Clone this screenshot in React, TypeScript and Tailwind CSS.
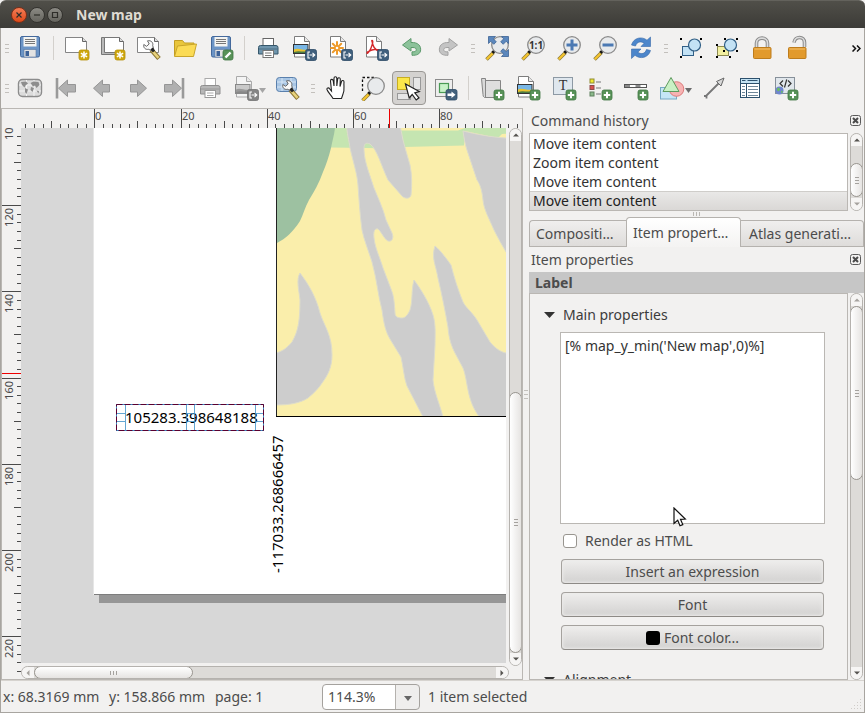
import React from "react";

const range = (from: number, to: number, step: number) => {
  const out: number[] = [];
  for (let v = from; v <= to; v += step) out.push(v);
  return out;
};

/* ---------- small marks shared by icons ---------- */

const AddMark = () => (
  <g>
    <rect x="14" y="14" width="10" height="10" rx="2" fill="#589258" stroke="#3f7743" strokeWidth="0.8" />
    <path d="M19 15.8v6.4M15.8 19h6.4" stroke="#fff" strokeWidth="2" />
  </g>
);
const StarMark = () => (
  <g>
    <rect x="14" y="14" width="10" height="10" rx="2" fill="#cfa70d" stroke="#b8930a" strokeWidth="0.8" />
    <path d="M19 15.5v7M15.9 17.2l6.2 3.6M22.1 17.2l-6.2 3.6" stroke="#fff" strokeWidth="1.5" />
  </g>
);
const ExportMark = ({ gray = false }: { gray?: boolean }) => (
  <g>
    <rect x="13.5" y="13.5" width="11" height="11" rx="2" fill={gray ? "#858585" : "#40607d"} stroke={gray ? "#727272" : "#2c4a66"} strokeWidth="0.8" />
    <path d="M18 16h-2v6h2M17.5 19h5M20.5 16.8l2.3 2.2-2.3 2.2" stroke="#fff" strokeWidth="1.1" fill="none" />
  </g>
);
const TallSheet = ({ gray = false }: { gray?: boolean }) => (
  <g>
    <path d="M2.5 0.5h10l5 5v15.5h-15z" fill={gray ? "#f4f4f4" : "#fff"} stroke={gray ? "#aaa" : "#7d7d7d"} />
    <path d="M12.5 0.5v5h5" fill="#e8e8e8" stroke={gray ? "#aaa" : "#7d7d7d"} />
  </g>
);
const WideSheet = () => (
  <g>
    <path d="M0.5 1.5h17l4 4v11h-21z" fill="#fff" stroke="#858585" />
    <path d="M17.5 1.5v4h4" fill="#dcdcdc" stroke="#666" />
  </g>
);
const Wrench = () => (
  <g>
    <path d="M14.5 14l7.5 8.500" stroke="#8a7430" strokeWidth="4.6" />
    <path d="M15 14.500l6.500 7.400" stroke="#e8d27c" strokeWidth="2.600" />
    <path d="M10.500 4.800c3.500-.8 6 1.800 5.200 4.700l1 3.500-2 1.800-3.200-1.500C8.500 14 6 11.500 6.800 8.500l2.700 1.800 2.700-2.300z" fill="#fafafa" stroke="#555" strokeWidth="0.9" />
    <path d="M14.500 12.500l2.500 3" stroke="#222" strokeWidth="2.800" />
  </g>
);
const Lens = ({ children }: { children?: React.ReactNode }) => (
  <g>
    <path d="M8.5 16.5L1.5 23.5" stroke="#8b7a3a" strokeWidth="3.6" />
    <path d="M7.5 17.5L1.8 23.2" stroke="#f6c52e" strokeWidth="2.2" />
    <path d="M9.8 14.5l-2.3 2.3" stroke="#111" strokeWidth="3" />
    <circle cx="15" cy="9" r="8.3" fill="#e8eaec" stroke="#8a8a8a" strokeWidth="1.3" />
    {children}
  </g>
);
const Printer = ({ gray = false }: { gray?: boolean }) => (
  <g>
    <rect x="7" y="2.5" width="10.5" height="8" fill="#fff" stroke={gray ? "#aaa" : "#666"} />
    <path d="M4.5 9.5h15.5a2 2 0 0 1 2 2v6.500h-19.500v-6.500a2 2 0 0 1 2-2z" fill={gray ? "#b7b7b7" : "#6f95ad"} stroke={gray ? "#8f8f8f" : "#35576b"} />
    <path d="M3 13h18.500" stroke={gray ? "#989898" : "#4c6f83"} />
    <rect x="7" y="14.5" width="10.5" height="7" fill="#fff" stroke={gray ? "#999" : "#777"} />
    <path d="M9 17h6.500M9 19.500h6.500" stroke={gray ? "#aaa" : "#777"} />
  </g>
);
const Arrow = ({ flip = false, bar = false }: { flip?: boolean; bar?: boolean }) => (
  <g transform={flip ? "translate(24 0) scale(-1 1)" : undefined}>
    {bar && <path d="M3 2v20.500" stroke="#9a9a9a" strokeWidth="2.6" />}
    <path
      d={bar ? "M4.500 12.200L13.500 4v4.500h8v7.500h-8v4.500z" : "M3.500 12.200L12.500 4v4.500h7v7.500h-7v4.500z"}
      fill="#b0b0b0"
      stroke="#969696"
    />
  </g>
);
const Floppy = () => (
  <g>
    <rect x="2.5" y="0.5" width="19" height="20.5" rx="1.5" fill="#6b94c6" stroke="#44699c" />
    <rect x="5.5" y="1" width="13" height="9.5" fill="#f4f4f2" />
    <path d="M7 3.500h10M7 5.500h10M7 7.500h10" stroke="#777" />
    <rect x="6" y="13.5" width="12" height="7.5" fill="#e3e3e3" stroke="#5877a0" strokeWidth="0.6" />
    <rect x="7.5" y="15" width="3.5" height="5" fill="#3d6298" />
  </g>
);
const Picture = ({ gray = false }: { gray?: boolean }) => (
  <g>
    <rect x="1.5" y="8.5" width="14.5" height="9" fill={gray ? "#c9c9c9" : "#79b7e6"} stroke={gray ? "#888" : "#333"} />
    <path d="M2 13.500c4-2.500 9 1.500 13.500 0V17H2z" fill={gray ? "#999" : "#e9c331"} />
    <path d="M2 16c5-2 9 .5 13.500-1V17H2z" fill={gray ? "#888" : "#4c7b45"} />
  </g>
);
const Lock = ({ open = false }: { open?: boolean }) => {
  const shackle = open ? "M8 6.500C9-.5 18.500 0 18.500 6.500V11" : "M6.500 12V7C6.500.5 17.500.5 17.500 7v5";
  return (
    <g>
      <path d={shackle} fill="none" stroke="#8a8a8a" strokeWidth="3.6" />
      <path d={shackle} fill="none" stroke="#dcdcdc" strokeWidth="1.6" />
      <rect x={open ? 2.5 : 3.5} y="11.5" width="17.5" height="11" rx="1" fill="#e29a2c" stroke="#bd7c1c" />
      <path d={open ? "M3.500 13h15.500" : "M4.500 13h15.500"} stroke="#f2bf6c" />
    </g>
  );
};
const Corners = () => (
  <path d="M2 2h2v2H2zM22 2h2v2h-2zM2 20h2v2H2zM22 20h2v2h-2z" fill="#000" />
);
const undoPath =
  "M2.5 9L11 2.5v4c7-.5 10.500 3.500 9.500 8.500-.8 3-3.500 4.500-8.500 4.300v-3.500c3.500.3 4.500-1.200 4.200-2.500-.4-1.800-2.200-1.800-5.200-1.800V15z";

const icons: Record<string, React.ReactNode> = {
  save: <Floppy />,
  newDoc: <g><WideSheet /><StarMark /></g>,
  duplicate: (
    <g>
      <path d="M0.5 1.5h17v17h-17z" fill="#b9b9b9" stroke="#777" />
      <path d="M3.5 1.5h15l4 4v11h-19z" fill="#fff" stroke="#777" />
      <path d="M18.5 1.5v4h4" fill="#dcdcdc" stroke="#666" />
      <StarMark />
    </g>
  ),
  manager: <g><WideSheet /><Wrench /></g>,
  open: (
    <g>
      <path d="M1.5 20V4.500h8l2 2.500h9.500v3" fill="#e9c63c" stroke="#c29d23" />
      <path d="M1.5 20.500L4.500 10l19-2-3 12.500z" fill="#fbdb55" stroke="#c9a52b" />
    </g>
  ),
  saveTemplate: (
    <g>
      <Floppy />
      <rect x="14" y="14" width="10" height="10" rx="2" fill="#589258" stroke="#3f7743" strokeWidth="0.8" />
      <path d="M16.500 21.500l5-5" stroke="#fff" strokeWidth="2.4" />
    </g>
  ),
  print: <Printer />,
  image: <g><TallSheet /><Picture /><ExportMark /></g>,
  svg: (
    <g>
      <TallSheet />
      <path d="M9 6v12M3 12h12M4.800 7.800l8.400 8.400M13.200 7.800l-8.400 8.400" stroke="#ee9a2a" strokeWidth="2" strokeLinecap="round" />
      <circle cx="9" cy="12" r="1.3" fill="#fff" />
      <ExportMark />
    </g>
  ),
  pdf: (
    <g>
      <TallSheet />
      <path d="M8 4.500c1.500 0 .5 4-1 7.500s-3.500 6-4 5 4-3 7.500-3.500 5.500.5 5 1.500-5.500-2-6.500-6-1.500-4.500-1-4.500z" fill="none" stroke="#d4282b" strokeWidth="1.4" />
      <ExportMark />
    </g>
  ),
  undo: <path d={undoPath} fill="#8cc29a" stroke="#5c9a6c" />,
  redo: <path transform="translate(24 0) scale(-1 1)" d={undoPath} fill="#c4c4c4" stroke="#a2a2a2" />,
  zoomFull: (
    <g>
      <Lens />
      <path d="M3.500.500h7L8.300 2.800l3 3-2.500 2.500-3-3L3.500 7.500zM23.500.500h-7l2.200 2.300-3 3 2.500 2.500 3-3 2.300 2.200zM23.500 20.500h-7l2.200-2.300-3-3 2.500-2.500 3 3 2.300-2.200z" fill="#5b87bd" stroke="#3c6394" strokeWidth="0.8" />
    </g>
  ),
  zoomActual: (
    <Lens>
      <text x="15" y="13" textAnchor="middle" className="text-[10px] font-bold" fill="#333">1:1</text>
    </Lens>
  ),
  zoomIn: <Lens><path d="M15 3.500v11M9.500 9h11" stroke="#4b79b3" strokeWidth="3" /></Lens>,
  zoomOut: <Lens><path d="M9.500 9h11" stroke="#4b79b3" strokeWidth="3" /></Lens>,
  refresh: (
    <g fill="#4c86cb" stroke="#3568a8" strokeWidth="0.6">
      <path d="M2.500 9C4.500 1.500 13 0 18 4.200L21.500 1v9.500h-9.500l3.200-3.300C11.500 5 8 5.500 6.500 10z" />
      <path d="M21.500 14.500c-2 7.500-10.500 9-15.500 4.800L2.500 22.500V13H12l-3.200 3.300c3.700 2.200 7.200 1.700 8.700-2.800z" />
    </g>
  ),
  group: (
    <g>
      <rect x="4.5" y="10.5" width="11" height="9" fill="#c3e2f5" stroke="#315f86" />
      <circle cx="16.5" cy="9" r="6" fill="#c3e2f5" stroke="#315f86" strokeWidth="1.2" />
      <Corners />
    </g>
  ),
  ungroup: (
    <g>
      <rect x="3.5" y="10.5" width="11" height="9" fill="#f3f0a0" stroke="#8c8a52" />
      <circle cx="16.5" cy="9" r="6" fill="#c3e2f5" stroke="#315f86" strokeWidth="1.2" />
      <path d="M2 8h2v2H2zM10 2h2v2h-2zM22 2h2v2h-2zM2 20h2v2H2zM22 14h2v2h-2zM15 20h2v2h-2zM9 14h2v2H9z" fill="#000" />
    </g>
  ),
  lock: <Lock />,
  unlock: <Lock open />,
  atlas: (
    <g>
      <rect x="0.5" y="3.5" width="23" height="17" rx="4" fill="#dcdcdc" stroke="#8c8c8c" strokeWidth="1.4" />
      <path d="M1 9h22M1 15h22M8.500 4v16M16 4v16" stroke="#f4f4f4" />
      <path d="M3 6l5-.5 2 2-2.500 2-1 2L4 9zM7 12l3 1.500-1.500 4.500L7 16zM12.500 7l3-1.500 5 .5 1 3-3 3-1.500-2.500-2 1zM13 11l3 1-1.500 4-2-2zM18.500 14.500l2.500.5-.5 2.500z" fill="#8d8d8d" />
    </g>
  ),
  first: <Arrow bar />,
  prev: <Arrow />,
  next: <Arrow flip />,
  last: <Arrow bar flip />,
  printGray: <Printer gray />,
  imageGray: <g><TallSheet gray /><Picture gray /><ExportMark gray /></g>,
  atlasSettings: (
    <g>
      <rect x="0.5" y="1.5" width="20" height="14" rx="3" fill="#a9c6e4" stroke="#5a80ad" />
      <path d="M1 6h19M1 11h19M6 2v13M15 2v13" stroke="#d7e6f5" />
      <Wrench />
    </g>
  ),
  pan: (
    <path d="M8 22.500C6 19 3 16.500 2 13.500c-.5-1.800 1.700-2.200 2.700-.7L6.500 15 5.500 5c0-2 2.300-2.200 2.700-.3L9 10V2.300c0-2 2.700-2 2.800 0V10l.9-7c.2-1.900 2.700-1.600 2.600.3L15 10.500l1.500-5c.6-1.700 2.700-1.100 2.500.7C18.500 10 20 14 18 18l-1.500 4.500z" fill="#fff" stroke="#222" strokeWidth="1.1" />
  ),
  zoomTool: (
    <g>
      <path d="M1.5 15V1.500H15" fill="none" stroke="#111" strokeWidth="1.3" strokeDasharray="2.5 2" />
      <g transform="translate(0 1)"><Lens /></g>
    </g>
  ),
  select: (
    <g>
      <rect x="0.5" y="1.5" width="12" height="12" fill="#fbe74a" stroke="#c7ad22" />
      <rect x="16.5" y="1.5" width="7" height="12" fill="#e6e6e6" stroke="#999" />
      <rect x="0.5" y="17.5" width="13" height="6" fill="#e6e6e6" stroke="#999" />
      <path d="M8.500 8l3.700 14 3-3.500 4 5.500 2.800-2.200-4.200-5 4.500-1.300z" fill="#fff" stroke="#222" strokeWidth="1.2" />
    </g>
  ),
  moveContent: (
    <g>
      <rect x="2.5" y="3.5" width="17" height="17" fill="#eee" stroke="#8b8b8b" />
      <rect x="6.5" y="7.5" width="9" height="9" fill="#c8f2c8" stroke="#4b9a55" strokeWidth="1.2" />
      <rect x="13" y="13.5" width="11" height="10.5" rx="2" fill="#43617c" stroke="#2c4a66" strokeWidth="0.8" />
      <path d="M14.500 17.500h4v-2l4 3.300-4 3.300v-2h-4z" fill="#fff" />
    </g>
  ),
  addMap: (
    <g>
      <path d="M1.5 2.500h4v13h3v6h-4a3 3 0 0 1-1.500-3z" fill="#d9d9d9" stroke="#858585" />
      <path d="M5.500 4.500h15v17h-15z" fill="#dedede" stroke="#858585" />
      <AddMark />
    </g>
  ),
  addImage: <g><TallSheet /><Picture /><AddMark /></g>,
  addLabel: (
    <g>
      <rect x="1.5" y="1.5" width="19" height="17" fill="#dfe7ee" stroke="#8d99a4" />
      <text x="11" y="14" textAnchor="middle" className="font-['Liberation_Serif',serif] text-[14px]" fill="#333">T</text>
      <AddMark />
    </g>
  ),
  addLegend: (
    <g>
      <rect x="2" y="3" width="4" height="4" fill="#f1ea2e" stroke="#8f8b33" />
      <rect x="2" y="9.5" width="4" height="4" fill="#d8504f" stroke="#8d4b4a" />
      <rect x="2" y="16" width="4" height="4" fill="#8bb98b" stroke="#5d805d" />
      <path d="M8 6h5M8 12h5M8 18h5" stroke="#a0a0a0" strokeWidth="1.4" />
      <AddMark />
    </g>
  ),
  addScale: (
    <g>
      <rect x="0.5" y="8.5" width="22" height="3" fill="#fff" stroke="#555" />
      <path d="M1 10h5M11.500 10h5" stroke="#8b8b8b" strokeWidth="2" />
      <AddMark />
    </g>
  ),
  addShape: (
    <g>
      <rect x="0.5" y="11.5" width="16" height="11.5" fill="#c5e6f6" stroke="#77a9c4" />
      <circle cx="16.5" cy="13" r="7.3" fill="#f7b3b3" stroke="#dd7c7c" />
      <path d="M11 1.500L19 15.500H3z" fill="#c9f0c4" stroke="#5e9a5e" />
    </g>
  ),
  addArrow: (
    <g>
      <path d="M3.500 20.500L17 7M2 20h2.500v2.500" stroke="#777" strokeWidth="1.8" fill="none" />
      <path d="M22 2l-3 8-4.500-4.500z" fill="#d8d8d8" stroke="#666" />
    </g>
  ),
  addTable: (
    <g>
      <rect x="2.5" y="2.5" width="19" height="19" fill="#fff" stroke="#2c506c" />
      <rect x="3" y="3" width="18" height="4" fill="#c3e2f3" />
      <path d="M3 7.500h18M8.500 7.500v14" stroke="#2c506c" />
      <path d="M4 4.500h3.500M9.500 4.500h10" stroke="#2c506c" />
      <path d="M4 10.500h3M4 13.500h3M4 16.500h3M4 19.500h3M10 10.500h10M10 13.500h10M10 16.500h10M10 19.500h10" stroke="#6f8799" />
    </g>
  ),
  addHtml: (
    <g>
      <rect x="1.5" y="1.5" width="19" height="16" fill="#e1e7ec" stroke="#87909a" />
      <path d="M9 4.500L6 7.500l3 3M14 4.500l3 3-3 3M12.700 3.500l-2.200 8" fill="none" stroke="#333" strokeWidth="1.2" />
      <circle cx="5.5" cy="14.5" r="4" fill="#6f86cf" />
      <path d="M3.500 12c2-1 3 1 2 2.500s-2 .5-2.500-.5zM7 14.500l2 1-1.500 2.300z" fill="#6cc05c" />
      <AddMark />
    </g>
  ),
};

type Tool = { id: string; label: string; drop?: boolean; pressed?: boolean; gray?: boolean } | "sep" | "grip";

const rowOne: Tool[] = [
  { id: "save", label: "Save project" }, "sep",
  { id: "newDoc", label: "New composer" }, { id: "duplicate", label: "Duplicate composer" },
  { id: "manager", label: "Composer manager" }, { id: "open", label: "Add items from template" },
  { id: "saveTemplate", label: "Save as template" }, "sep",
  { id: "print", label: "Print" }, { id: "image", label: "Export as image" }, { id: "svg", label: "Export as SVG" },
  { id: "pdf", label: "Export as PDF" }, { id: "undo", label: "Undo" }, { id: "redo", label: "Redo" }, "grip",
  { id: "zoomFull", label: "Zoom full" }, { id: "zoomActual", label: "Zoom to 100%" }, { id: "zoomIn", label: "Zoom in" },
  { id: "zoomOut", label: "Zoom out" }, { id: "refresh", label: "Refresh view" }, "grip",
  { id: "group", label: "Group items" }, { id: "ungroup", label: "Ungroup items" },
  { id: "lock", label: "Lock selected items" }, { id: "unlock", label: "Unlock all items" },
];

const rowTwo: Tool[] = [
  { id: "atlas", label: "Preview atlas" }, { id: "first", label: "First feature" }, { id: "prev", label: "Previous feature" },
  { id: "next", label: "Next feature" }, { id: "last", label: "Last feature" }, { id: "printGray", label: "Print atlas" },
  { id: "imageGray", label: "Export atlas", drop: true, gray: true }, { id: "atlasSettings", label: "Atlas settings" }, "grip",
  { id: "pan", label: "Pan composer" }, { id: "zoomTool", label: "Zoom" }, { id: "select", label: "Select or move item", pressed: true },
  { id: "moveContent", label: "Move item content" }, "sep",
  { id: "addMap", label: "Add new map" }, { id: "addImage", label: "Add image" }, { id: "addLabel", label: "Add new label" },
  { id: "addLegend", label: "Add new legend" }, { id: "addScale", label: "Add new scalebar" },
  { id: "addShape", label: "Add basic shape", drop: true }, { id: "addArrow", label: "Add arrow" },
  { id: "addTable", label: "Add attribute table" }, { id: "addHtml", label: "Add HTML frame" },
];

const Grip = () => (
  <span className="flex flex-col gap-[3px]">
    <i className="h-px w-1 bg-[#c3c0bc]" /><i className="h-px w-1 bg-[#c3c0bc]" /><i className="h-px w-1 bg-[#c3c0bc]" />
  </span>
);

function Toolbar({ tools, label, more }: { tools: Tool[]; label: string; more?: boolean }) {
  return (
    <div role="toolbar" aria-label={label} className="flex h-10 items-center overflow-hidden">
      <span className="flex w-[11px] shrink-0 justify-center"><Grip /></span>
      {tools.map((t, i) => {
        if (t === "sep") return <span key={i} className="flex w-[11px] shrink-0 justify-center"><i className="h-6 w-px bg-[#d3d0cc]" /></span>;
        if (t === "grip") return <span key={i} className="flex w-[13px] shrink-0 justify-center"><Grip /></span>;
        return (
          <button
            key={i}
            aria-label={t.label}
            className={
              t.pressed
                ? "flex h-[34px] w-[34px] mx-px shrink-0 items-center justify-center rounded border border-[#9a9895] bg-[#d4d2d0]"
                : t.drop
                  ? "flex h-9 w-[42px] shrink-0 items-center justify-center"
                  : "flex h-9 w-9 shrink-0 items-center justify-center"
            }
          >
            <svg width="26" height="26" viewBox="-1 -1 26 26" className="shrink-0">{icons[t.id]}</svg>
            {t.drop && (
              <svg width="7" height="5" viewBox="0 0 7 5" className="mt-1 shrink-0">
                <path d="M0 0h7L3.5 5z" fill={t.gray ? "#a5a5a5" : "#6c6c6c"} />
              </svg>
            )}
          </button>
        );
      })}
      {more && (
        <button aria-label="More tools" className="ml-auto mr-[3px] shrink-0">
          <svg width="9" height="7" viewBox="0 0 9 7"><path d="M.5.5l3 3-3 3M5 .5l3 3-3 3" fill="none" stroke="#111" strokeWidth="1.5" /></svg>
        </button>
      )}
    </div>
  );
}

/* ---------- scroll bars ---------- */

const Tri = ({ dir, dim }: { dir: "up" | "down" | "left" | "right"; dim?: boolean }) => {
  const d = { up: "M0 4.5h6L3 1.5z", down: "M0 1.5h6L3 4.5z", left: "M4.5 0v6L1.5 3z", right: "M1.5 0v6L4.5 3z" }[dir];
  return <svg width="6" height="6" viewBox="0 0 6 6"><path d={d} fill={dim ? "#a5a29e" : "#55534f"} /></svg>;
};

function VBar({ before, thumb, after, dimUp, dimDown }: { before: number; thumb: number; after: number; dimUp?: boolean; dimDown?: boolean }) {
  return (
    <div className="flex w-[13px] shrink-0 flex-col overflow-hidden rounded-full border border-[#b5b2ae] bg-[#dddbd8]">
      <button aria-label="Scroll up" className="flex h-3 shrink-0 items-center justify-center bg-[#f6f5f4]"><Tri dir="up" dim={dimUp} /></button>
      <div className="basis-0" style={{ flexGrow: before }} />
      <div style={{ flexGrow: thumb }} className="-mx-px flex basis-0 flex-col items-center justify-center gap-[2px] rounded-full border border-[#98958f] bg-linear-to-r from-white to-[#e6e4e2]">
        <i className="h-px w-1 bg-[#a5a29e]" /><i className="h-px w-1 bg-[#a5a29e]" /><i className="h-px w-1 bg-[#a5a29e]" />
      </div>
      <div className="basis-0" style={{ flexGrow: after }} />
      <button aria-label="Scroll down" className="flex h-3 shrink-0 items-center justify-center bg-[#f6f5f4]"><Tri dir="down" dim={dimDown} /></button>
    </div>
  );
}

function HBar() {
  return (
    <div className="mt-[3px] flex h-[13px] shrink-0 overflow-hidden rounded-full border border-[#b5b2ae] bg-[#dddbd8]">
      <button aria-label="Scroll left" className="flex w-3 shrink-0 items-center justify-center bg-[#f6f5f4]"><Tri dir="left" dim /></button>
      <div className="-my-px flex grow-[157] basis-0 items-center justify-center gap-[2px] rounded-full border border-[#98958f] bg-linear-to-b from-white to-[#e6e4e2]">
        <i className="h-1 w-px bg-[#a5a29e]" /><i className="h-1 w-px bg-[#a5a29e]" /><i className="h-1 w-px bg-[#a5a29e]" />
      </div>
      <div className="grow-[304] basis-0" />
      <button aria-label="Scroll right" className="flex w-3 shrink-0 items-center justify-center bg-[#f6f5f4]"><Tri dir="right" /></button>
    </div>
  );
}

/* ---------- rulers and page ---------- */

const PX_PER_MM = 4.313;
const mmX = (mm: number) => Math.round(94.3 + mm * PX_PER_MM) - 2;
const mmY = (mm: number) => Math.round(205 + (mm - 120) * PX_PER_MM) - 128;

function TopRuler() {
  return (
    <svg className="block h-[19px] w-full shrink-0" aria-label="Horizontal ruler">
      {range(-16, 400, 2).map((mm) => {
        const h = mm % 20 === 0 ? 19 : mm % 10 === 0 ? 7 : 4;
        return <rect key={mm} x={mmX(mm)} y={19 - h} width="1" height={h} fill="#4a4a4a" />;
      })}
      {range(0, 80, 20).map((mm) => (
        <text key={mm} x={mmX(mm) + 1} y="11" className="text-[11px]" fill="#4a4a4a">{mm}</text>
      ))}
      <rect x="387" y="0" width="1" height="19" fill="#e00" />
    </svg>
  );
}

function SideRuler() {
  return (
    <svg className="block w-[19px] shrink-0 self-stretch" aria-label="Vertical ruler">
      {range(102, 228, 2).map((mm) => {
        const w = mm % 20 === 0 ? 19 : mm % 10 === 0 ? 7 : 4;
        return <rect key={mm} x={19 - w} y={mmY(mm)} width={w} height="1" fill="#4a4a4a" />;
      })}
      {range(120, 220, 20).map((mm) => (
        <text key={mm} transform={`translate(11 ${mmY(mm) + 3}) rotate(-90)`} textAnchor="end" className="text-[11px]" fill="#4a4a4a">{mm}</text>
      ))}
      <text transform="translate(11 12) rotate(-90)" className="text-[11px]" fill="#4a4a4a">10</text>
      <rect x="0" y="245" width="19" height="1" fill="#e00" />
    </svg>
  );
}

function PageCanvas() {
  return (
    <svg className="mr-[3px] block min-h-0 flex-1 bg-[#d7d7d7]" aria-label="Composition">
      <defs>
        <clipPath id="mapClip"><rect x="277" y="128" width="700" height="288" /></clipPath>
      </defs>
      <g transform="translate(-21 -128)">
        <rect x="99" y="560" width="1200" height="43" fill="#969696" />
        <rect x="93" y="100" width="1200" height="495" fill="#e6e6e6" />
        <rect x="94" y="594" width="1200" height="1" fill="#7d7d7d" />
        <rect x="94" y="100" width="1200" height="494" fill="#fff" />
        <g clipPath="url(#mapClip)">
          <rect x="277" y="128" width="700" height="288" fill="#faeeab" />
          <path d="M330 128H400V148.500L331 147.500z" fill="#c5e5b1" />
          <path d="M399 130.500H458L465 128H520V133L502 134 498 138 465 131 464 145.500 404 147z" fill="#c5e5b1" />
          <path d="M277 120H336L335 128C334 136 332 142 331 148 329 156 326 165 323 172 319 183 314 192 309 200 305 207 303 215 300 221 293 232 285 239 277 243z" fill="#9dc1a1" />
          <g fill="#cdcdcd" stroke="#dddccc">
            <path d="M346 120C347 135 349 140 350 148 354 165 357 173 358 185 359 200 360 215 362 230 364 240 369 252 372 262 377 280 378 295 382 310 384 325 386 332 390 339L401 357C403 365 404 378 407 386L423 417H443C440 405 434 392 433 380L435 345C435 335 436 325 433 315 429 302 420 288 414 280 411 292 413 300 410 310 407 317 404 318 402 318 398 318 395 317 395 313 394 300 394 297 391 289L383 268C380 258 375 248 374 238 373 231 375 228 378 229 381 231 384 239 388 241 392 242 394 238 392 233L386 220C383 208 378 198 374 188L368 170C365 160 364 155 364 148 364 144 366 142 370 144 377 149 381 165 388 180L402 196C405 199 410 199 411 195 412 185 412 175 410 165 408 158 405 148 403 140L399 120z" />
            <path d="M300 273C296 280 299 290 300 300 300 325 297 333 292 342 287 348 283 351 276 353V405C290 405 300 403 308 398 314 393 319 388 322 383 328 375 332 367 332 355 332 335 325 328 320 313 316 297 309 285 300 273z" />
            <path d="M435 246C431 258 436 265 438 278 442 295 445 310 448 327 449 340 452 347 455 353L463 368C466 375 467 388 470 398 473 408 476 412 480 418H560V353H506C500 352 494 347 490 342L477 320C472 312 466 308 463 302 458 290 454 277 451 265 446 258 440 250 435 246z" />
            <path d="M463 131C464 138 465 144 467 150L477 180C480 184 482 190 483 200 484 210 489 218 494 230 498 238 502 245 506 252L560 320V138H506C490 137 475 134 463 131z" />
          </g>
        </g>
        <rect x="276" y="128" width="1" height="289" fill="#222" />
        <rect x="276" y="416" width="900" height="1" fill="#000" />

        <text x="125" y="423" className="text-[15px]" fill="#000">105283.398648188</text>
        <g fill="none" stroke="#3b8fc7">
          <rect x="116.5" y="404.5" width="147" height="26" />
          <path d="M125.500 404v26M255.500 404v26M186.500 404v26M194.500 404v26M186 413.500h9M186 421.500h9M116 413.500h9M116 421.500h9M255 413.500h9M255 421.500h9" strokeWidth="0.8" />
          <rect x="116.5" y="404.5" width="147" height="26" stroke="#5a0030" strokeDasharray="6 2" />
        </g>
        <text transform="translate(283 573) rotate(-90)" className="text-[15px]" fill="#000">-117033.268666457</text>
      </g>
    </svg>
  );
}

/* ---------- dock ---------- */

function DockTitle({ children }: { children: string }) {
  return (
    <div className="flex h-[25px] shrink-0 items-center justify-between pl-0.5 pr-[3px]">
      <h2>{children}</h2>
      <button aria-label={`Close ${children}`}>
        <svg width="11" height="11" viewBox="0 0 11 11" className="block">
          <rect x="0.5" y="0.5" width="10" height="10" rx="2" fill="none" stroke="#5a5a5a" />
          <path d="M3 3l5 5M8 3l-5 5" stroke="#4a4a4a" strokeWidth="2" />
        </svg>
      </button>
    </div>
  );
}

const pushButton =
  "flex h-[25px] items-center justify-center gap-1 rounded border border-[#a5a29e] border-b-[#8d8a86] bg-linear-to-b from-[#efeeed] to-[#d2d1d0] shadow-[inset_0_0_3px_1px_#ecebea]";

function Section({ title, children }: { title: string; children?: React.ReactNode }) {
  return (
    <section>
      <h3 className="flex h-5 items-center gap-2 pl-[14px] text-[#3c3c3c]">
        <svg width="11" height="6" viewBox="0 0 11 6"><path d="M0 0h11L5.5 6z" fill="#333" /></svg>
        {title}
      </h3>
      {children}
    </section>
  );
}

function Dock() {
  const history = ["Move item content", "Zoom item content", "Move item content", "Move item content"];
  return (
    <aside className="flex w-[335px] shrink-0 flex-col">
      <DockTitle>Command history</DockTitle>
      <div className="flex shrink-0 justify-between pr-px">
        <ul role="listbox" aria-label="Command history" className="w-[319px] border border-[#bab7b3] bg-white text-[#333]">
          {history.map((h, i) => (
            <li
              key={i}
              role="option"
              aria-selected={i === 3}
              className={i === 3 ? "h-[19px] border-t border-[#cfcdca] bg-linear-to-b from-[#e9e8e7] to-[#dad8d6] pl-[3px] leading-[18px] text-[#222]" : "h-[19px] pl-[3px] leading-[19px]"}
            >
              {h}
            </li>
          ))}
        </ul>
        <VBar before={18} thumb={34} after={1} dimDown />
      </div>
      <div className="flex h-[6px] shrink-0 items-center justify-center gap-[2px]">
        <i className="h-1 w-px bg-[#bab7b3]" /><i className="h-1 w-px bg-[#bab7b3]" /><i className="h-1 w-px bg-[#bab7b3]" />
      </div>
      <div role="tablist" className="flex h-[30px] shrink-0 items-end text-left">
        <button role="tab" aria-selected="false" className="h-[27px] w-[97px] truncate rounded-tl border border-r-0 border-[#b5b2ae] bg-linear-to-b from-[#f0efee] to-[#dedcda] px-1.5 text-left">Compositi…</button>
        <button role="tab" aria-selected="true" className="h-[30px] w-[115px] truncate rounded-t border border-b-0 border-[#b5b2ae] bg-linear-to-b from-white to-[#f4f3f2] px-1.5 text-left">Item propert…</button>
        <button role="tab" aria-selected="false" className="h-[27px] min-w-0 flex-1 truncate rounded-tr border border-l-0 border-[#b5b2ae] bg-linear-to-b from-[#f0efee] to-[#dedcda] px-2 text-left">Atlas generati…</button>
      </div>
      <DockTitle>Item properties</DockTitle>
      <div className="h-[21px] shrink-0 bg-[#c6c6c6] pl-1.5 font-bold leading-[21px]">Label</div>
      <div className="flex min-h-0 flex-1 justify-between pr-px">
        <div className="flex w-[319px] flex-col overflow-hidden border border-[#bab7b3] pt-[11px]">
          <Section title="Main properties">
            <div className="ml-[30px] mr-[22px] mt-[7px] flex flex-col">
              <div className="relative">
                <textarea
                  aria-label="Label text"
                  defaultValue="[% map_y_min('New map',0)%]"
                  className="block h-48 w-full resize-none border border-[#bab7b3] bg-white px-1 py-[3px] leading-[19px] text-[#333] outline-none"
                />
                <svg width="14" height="20" viewBox="0 0 14 20" className="absolute left-[113px] top-[175px]">
                  <path d="M1 1v15.500l3.700-3.300 2.300 5.600 2.800-1.200-2.300-5.300 4.800-.3z" fill="#fff" stroke="#111" strokeWidth="1.2" />
                </svg>
              </div>
              <label className="mt-[7px] flex h-5 items-center gap-2 pl-[3px]">
                <input type="checkbox" className="h-[14px] w-[14px] appearance-none rounded-[3px] border border-[#98958f] bg-white" />
                Render as HTML
              </label>
              <div className="mx-px mt-2 flex flex-col gap-2">
                <button className={pushButton}>Insert an expression</button>
                <button className={pushButton}>Font</button>
                <button className={pushButton}>
                  <i className="h-[14px] w-[14px] rounded-[3px] bg-black" />
                  Font color...
                </button>
              </div>
            </div>
          </Section>
          <div className="mt-5">
            <Section title="Alignment" />
          </div>
        </div>
        <VBar before={0} thumb={173} after={188} dimUp />
      </div>
    </aside>
  );
}

/* ---------- window ---------- */

function WindowButton({ label, close, children }: { label: string; close?: boolean; children: React.ReactNode }) {
  return (
    <button
      aria-label={label}
      className={
        close
          ? "flex h-4 w-4 items-center justify-center rounded-full border border-[#7c2f18] bg-linear-to-b from-[#f47c54] to-[#dd4814]"
          : "flex h-4 w-4 items-center justify-center rounded-full border border-[#33322e] bg-linear-to-b from-[#8b8a84] to-[#65645e]"
      }
    >
      <svg width="8" height="8" viewBox="0 0 8 8" fill="none" stroke="#2e2d29" strokeWidth="1.2">{children}</svg>
    </button>
  );
}

export default function App() {
  return (
    <div className="flex h-screen flex-col overflow-hidden bg-[#f2f1f0] font-['Noto_Sans','Open_Sans',sans-serif] text-[14px] leading-5 text-[#4c4c4c]">
      <header className="flex h-7 shrink-0 items-center gap-[2px] rounded-t-md border-t border-[#63625c] bg-linear-to-b from-[#504f49] to-[#3c3b37] pl-[11px]">
        <WindowButton label="Close" close><path d="M1.500 1.500l5 5M6.500 1.500l-5 5" /></WindowButton>
        <WindowButton label="Minimize"><path d="M1 4h6" /></WindowButton>
        <WindowButton label="Maximize"><path d="M1.500 1.500h5v5h-5z" /></WindowButton>
        <h1 className="pl-[11px] font-bold text-[#dfdbd2]">New map</h1>
      </header>

      <div className="flex min-h-0 flex-1 flex-col border-x border-b border-[#a8a5a0]">
        <Toolbar tools={rowOne} label="Composer" more />
        <Toolbar tools={rowTwo} label="Composer items" />

        <main className="flex min-h-0 flex-1">
          <div className="flex min-w-0 flex-1 flex-col border border-[#bab7b3]">
            <TopRuler />
            <div className="flex min-h-0 flex-1">
              <SideRuler />
              <div className="flex min-w-0 flex-1 flex-col">
                <PageCanvas />
                <HBar />
              </div>
              <div className="flex pb-[13px]">
                <VBar before={251} thumb={260} after={0} />
              </div>
            </div>
          </div>
          <div className="flex w-[6px] shrink-0 items-center justify-center"><Grip /></div>
          <Dock />
        </main>

        <footer className="flex h-8 shrink-0 items-center border-t border-[#d6d3cf] pl-0.5">
          <span className="w-[106px]">x: 68.3169 mm</span>
          <span className="w-[106px]">y: 158.866 mm</span>
          <span className="w-[107px]">page: 1</span>
          <div className="relative mr-2 h-[26px] w-[98px]">
            <select aria-label="Zoom level" className="h-full w-full appearance-none rounded border border-[#a5a29e] bg-linear-to-r from-white from-75% to-[#efeeed] to-75% pl-[5px] text-[#4c4c4c]">
              <option>114.3%</option>
            </select>
            <i className="pointer-events-none absolute right-[24px] top-px h-6 w-px bg-[#b5b2ae]" />
            <svg width="8" height="5" viewBox="0 0 8 5" className="pointer-events-none absolute right-[8px] top-[12px]"><path d="M0 0h8L4 5z" fill="#666" /></svg>
          </div>
          <span>1 item selected</span>
          <svg width="11" height="11" viewBox="0 0 11 11" className="mb-0.5 ml-auto mr-0.5 self-end" fill="#d0cdc9">
            <path d="M9 0h1v1H9zM9 3h1v1H9zM6 3h1v1H6zM9 6h1v1H9zM6 6h1v1H6zM3 6h1v1H3zM9 9h1v1H9zM6 9h1v1H6zM3 9h1v1H3zM0 9h1v1H0z" />
          </svg>
        </footer>
      </div>
    </div>
  );
}
